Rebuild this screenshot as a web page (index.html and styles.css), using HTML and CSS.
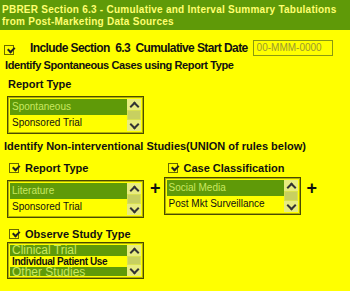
FILE: index.html
```html
<!DOCTYPE html>
<html lang="en">
<head>
    <meta charset="UTF-8">
    <title>PBRER Section 6.3</title>
    <link rel="stylesheet" href="styles.css">
</head>
<body>

<div class="header">
    PBRER Section 6.3 - Cumulative and Interval Summary Tabulations<br>
    from Post-Marketing Data Sources
</div>

<div class="include-row">
    <span class="check"></span>
    <span class="include-label">Include Section&nbsp; 6.3&nbsp; Cumulative Start Date</span>
    <input class="date-input" type="text" value="00-MMM-0000">
</div>

<div class="title spont">Identify Spontaneous Cases using Report Type</div>
<div class="title sub">Report Type</div>

<div class="listbox">
    <div class="items">
        <div class="item selected">Spontaneous</div>
        <div class="item">Sponsored Trial</div>
    </div>
    <div class="scroll">
        <span class="arrow up"></span>
        <span class="thumb"></span>
        <span class="arrow down"></span>
    </div>
</div>

<div class="title nonint">Identify Non-interventional Studies(UNION of rules below)</div>

<div class="rules">
    <div class="rule">
        <div class="rule-head"><span class="check"></span><span class="title">Report Type</span></div>
        <div class="listbox">
            <div class="items">
                <div class="item selected">Literature</div>
                <div class="item">Sponsored Trial</div>
            </div>
            <div class="scroll">
                <span class="arrow up"></span>
                <span class="thumb"></span>
                <span class="arrow down"></span>
            </div>
        </div>
    </div>
    <div class="plus">+</div>
    <div class="rule">
        <div class="rule-head"><span class="check"></span><span class="title">Case Classification</span></div>
        <div class="listbox">
            <div class="items">
                <div class="item selected">Social Media</div>
                <div class="item">Post Mkt Surveillance</div>
            </div>
            <div class="scroll">
                <span class="arrow up"></span>
                <span class="thumb"></span>
                <span class="arrow down"></span>
            </div>
        </div>
    </div>
    <div class="plus">+</div>
</div>

<div class="rule study">
    <div class="rule-head"><span class="check"></span><span class="title">Observe Study Type</span></div>
    <div class="listbox short">
        <div class="items">
            <div class="item selected big">Clinical Trial</div>
            <div class="item dense">Individual Patient Use</div>
            <div class="item selected big">Other Studies</div>
        </div>
        <div class="scroll">
            <span class="arrow up"></span>
            <span class="thumb"></span>
            <span class="arrow down"></span>
        </div>
    </div>
</div>

</body>
</html>
```

FILE: styles.css
```css
* {
    box-sizing: border-box;
    margin: 0;
    padding: 0;
}
body {
    font-family: 'Liberation Sans', Arial, sans-serif;
    background-color: #ffff00;
    width: 350px;
    height: 291px;
    overflow: hidden;
}
.header {
    background-color: #5f9a08;
    color: #ffff70;
    font-size: 10px;
    font-weight: bold;
    letter-spacing: 0.25px;
    line-height: 12px;
    padding: 4px 2px 5px;
    height: 30px;
    white-space: nowrap;
}
.include-row {
    display: flex;
    align-items: center;
    padding: 7px 0 0 4px;
    height: 21px;
    box-sizing: content-box;
}
.check {
    display: inline-block;
    width: 10px;
    height: 10px;
    border: 1px solid #6a6a00;
    position: relative;
    flex-shrink: 0;
}
.check::after {
    content: "";
    position: absolute;
    left: 2px;
    top: 4px;
    width: 5px;
    height: 3px;
    border-left: 2px solid #222;
    border-bottom: 2px solid #222;
    transform: rotate(-45deg);
    transform-origin: 0 0;
}
.include-row .check {
    margin-top: 4px;
}
.include-label {
    font-size: 12px;
    font-weight: bold;
    letter-spacing: -0.6px;
    color: #111;
    margin-left: 16px;
    white-space: nowrap;
}
.date-input {
    margin-left: 5px;
    width: 80px;
    height: 16px;
    border: 1px solid #8a9a10;
    background: #ffff00;
    color: #9a9a30;
    font-family: 'Liberation Sans', Arial, sans-serif;
    font-size: 10px;
    padding: 0 3px;
    outline: none;
}
.title {
    font-size: 11px;
    font-weight: bold;
    color: #111;
    white-space: nowrap;
}
.spont {
    margin: 1px 0 0 5px;
    letter-spacing: -0.4px;
}
.sub {
    margin: 7px 0 0 8px;
}
.listbox {
    display: flex;
    width: 137px;
    height: 38px;
    border: 1px solid #4a4a00;
    box-shadow: inset 0 0 0 1px #b0b000;
    padding: 2px;
    margin: 6px 0 0 7px;
}
.items {
    flex: 1;
    overflow: hidden;
}
.item {
    font-size: 10px;
    height: 16px;
    line-height: 16px;
    padding-left: 2px;
    color: #111;
    white-space: nowrap;
}
.item.selected {
    background-color: #5f9a08;
    color: #c8e860;
}
.scroll {
    width: 14px;
    display: flex;
    flex-direction: column;
    background: #d8e050;
}
.arrow {
    height: 11px;
    position: relative;
    background: #e8ec80;
}
.arrow::after {
    content: "";
    position: absolute;
    left: 4px;
    width: 5px;
    height: 5px;
    border-left: 2px solid #333;
    border-top: 2px solid #333;
}
.arrow.up::after {
    top: 4px;
    transform: rotate(45deg);
}
.arrow.down::after {
    top: 1px;
    transform: rotate(225deg);
}
.thumb {
    flex: 1;
    margin: 1px;
    background: #c8d060;
}
.nonint {
    margin: 6px 0 0 4px;
}
.rules {
    display: flex;
    align-items: flex-start;
    margin-top: 10px;
}
.rule-head {
    display: flex;
    align-items: center;
    margin-left: 9px;
}
.rule-head .title {
    margin-left: 6px;
}
.plus {
    font-size: 18px;
    font-weight: bold;
    color: #111;
    margin: 16px 3px 0 6px;
}
.rules .rule + .plus + .rule .rule-head {
    margin-left: 4px;
}
.rules .rule + .plus + .rule .listbox {
    margin-left: 0;
    margin-top: 3px;
}
.study {
    margin-top: 10px;
}
.study .listbox {
    margin-top: 2px;
    height: 37px;
}
.item.big {
    font-size: 12px;
    height: 11px;
    line-height: 11px;
}
.item.dense {
    height: 11px;
    line-height: 11px;
    font-weight: bold;
    letter-spacing: -0.4px;
}
```
